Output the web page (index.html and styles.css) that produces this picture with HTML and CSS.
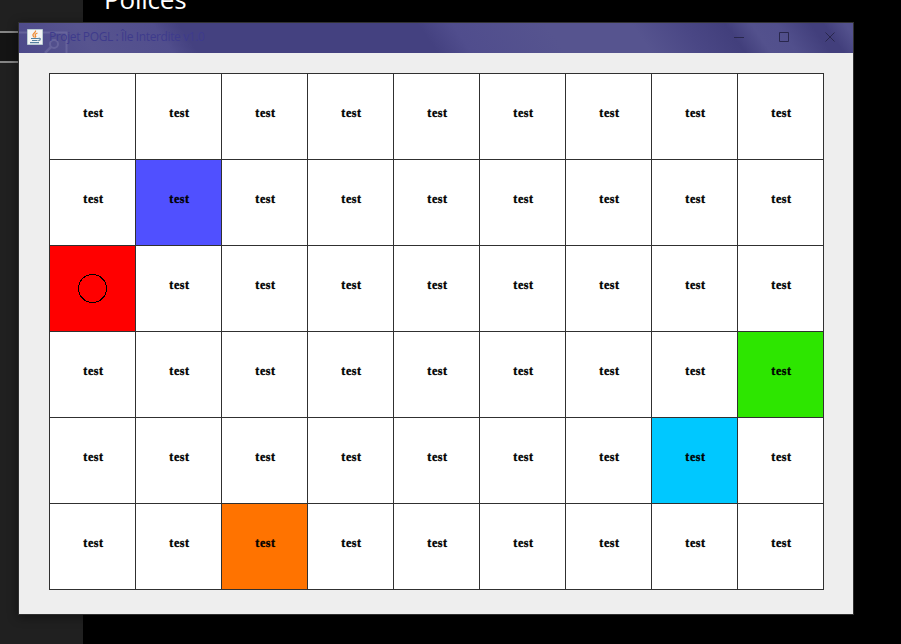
FILE: index.html
```html
<!DOCTYPE html>
<html lang="fr">
<head>
<meta charset="utf-8">
<title>Projet POGL : Île Interdite v1.0</title>
<link rel="stylesheet" href="styles.css">
</head>
<body>
<div class="desktop">
  <aside class="sidebar"><div class="search"></div></aside>
  <div class="heading">Polices</div>
  <main class="window">
    <header class="titlebar">
      <svg class="ghost" width="50" height="30" viewBox="0 0 50 30" fill="none" stroke="#7774a8">
        <path d="M0 9.500H47.500V30" stroke-width="2"/>
        <circle cx="35" cy="21" r="4" stroke-width="2"/>
        <path d="M32 24l-6 6" stroke-width="2.500"/>
      </svg>
      <svg class="java" width="16" height="16" viewBox="0 0 16 16" fill="none">
        <path d="M.5.5h15v15H.5z" fill="#f3f4f5" stroke="#b9cbd2"/>
        <path d="M8.500 1.500c1 2-3.500 3-2.500 5 .3.800 1 1.200 1.500 2M10.500 4c-2 .8-3 1.600-2 2.800.5.700 0 1.400-.4 1.700" stroke="#ee8b36" stroke-width="1.300"/>
        <path d="M4 9.500h7M5 11.500h5.500M3 13.700h9M11 9.500c3-1 3 1.500.3 2.200" stroke="#55819f" stroke-width="1.200"/>
      </svg>
      <span class="title">Projet POGL : Île Interdite v1.0</span>
      <svg class="controls" width="138" height="30" viewBox="0 0 138 30" fill="none" stroke="#29274d">
        <path d="M18 14.500h10M63.500 9.500h9v9h-9zM109.500 9.500l9 9M118.500 9.500l-9 9"/>
      </svg>
    </header>
    <section class="content">
      <div class="grid" id="grid"></div>
    </section>
  </main>
</div>
<script src="grid.js"></script>
</body>
</html>
```
FILE: styles.css
```css
* { box-sizing: border-box; }
body { margin: 0; background: #000; }
.desktop { position: relative; width: 901px; height: 644px; overflow: hidden; background: #000; }
.sidebar { width: 83px; height: 644px; padding-top: 31px; background: #202020; }
.search { height: 32px; border: solid #858585; border-width: 2px 0; background: #141414; }
.heading {
  position: absolute; left: 104px; top: -19px; letter-spacing: -.2px;
  font: 26px/36px "Open Sans", "Noto Sans", sans-serif; color: #fff;
}
.window {
  position: absolute; left: 18px; top: 22px; width: 836px; height: 593px;
  border: 1px solid #303030; background: #eee;
  box-shadow: 0 2px 10px rgba(0, 0, 0, .45);
}
.titlebar {
  position: relative; display: flex; height: 30px; padding-left: 8px; align-items: flex-start;
  background: linear-gradient(55deg, #4c498a 0, #57548f 9%, #514e8d 18%, #4c4988 19%, #444180 21%, #444180 49%, #504d8d 53%, #56548f 64%, #56548f 74%, #4a4785 80%, #423f7c 85%, #53518d 88%, #514f8c 91%, #423f7c 95%, #423f7c 96.500%, #53518d 99%);
}
.ghost { position: absolute; left: 0; top: 0; opacity: .55; }
.java { position: relative; margin-top: 6px; }
.title {
  position: relative; margin: 5px 0 0 6px; width: 156px; white-space: nowrap;
  font: 12px/18px "Open Sans", "Noto Sans", sans-serif; letter-spacing: -.38px; color: #3e3b8c;
}
.controls { margin-left: auto; margin-right: -1px; }
.content { padding: 20px 30px; }
.grid {
  display: grid; grid-template-columns: repeat(9, 86px); grid-auto-rows: 86px;
  width: 775px; border: solid #303030; border-width: 1px 0 0 1px;
}
.cell {
  display: flex; justify-content: center; padding: 31px 0 0 2px;
  border: solid #303030; border-width: 0 1px 1px 0; background: #fff;
  font: bold 12px/16px "Liberation Serif", serif; letter-spacing: .6px; color: #000;
  -webkit-text-stroke: .35px #000;
}
.blue { background: #5050ff; }
.red { background: #f00; }
.green { background: #2de600; }
.cyan { background: #00c8ff; }
.orange { background: #ff7300; }
.pawn { display: block; margin: -3px 0 0 -2px; }
```
FILE: grid.js
```js
const colours = { 10: "blue", 18: "red", 35: "green", 43: "cyan", 47: "orange" };
const pawn = '<svg class="pawn" width="29" height="29" shape-rendering="crispEdges"><circle cx="14.500" cy="14.500" r="14" fill="none" stroke="#000"/></svg>';
const grid = document.getElementById("grid");
for (let i = 0; i < 54; i++) {
  const cell = document.createElement("div");
  cell.className = "cell " + (colours[i] || "");
  if (i === 18) cell.innerHTML = pawn;
  else cell.textContent = "test";
  grid.append(cell);
}
```
